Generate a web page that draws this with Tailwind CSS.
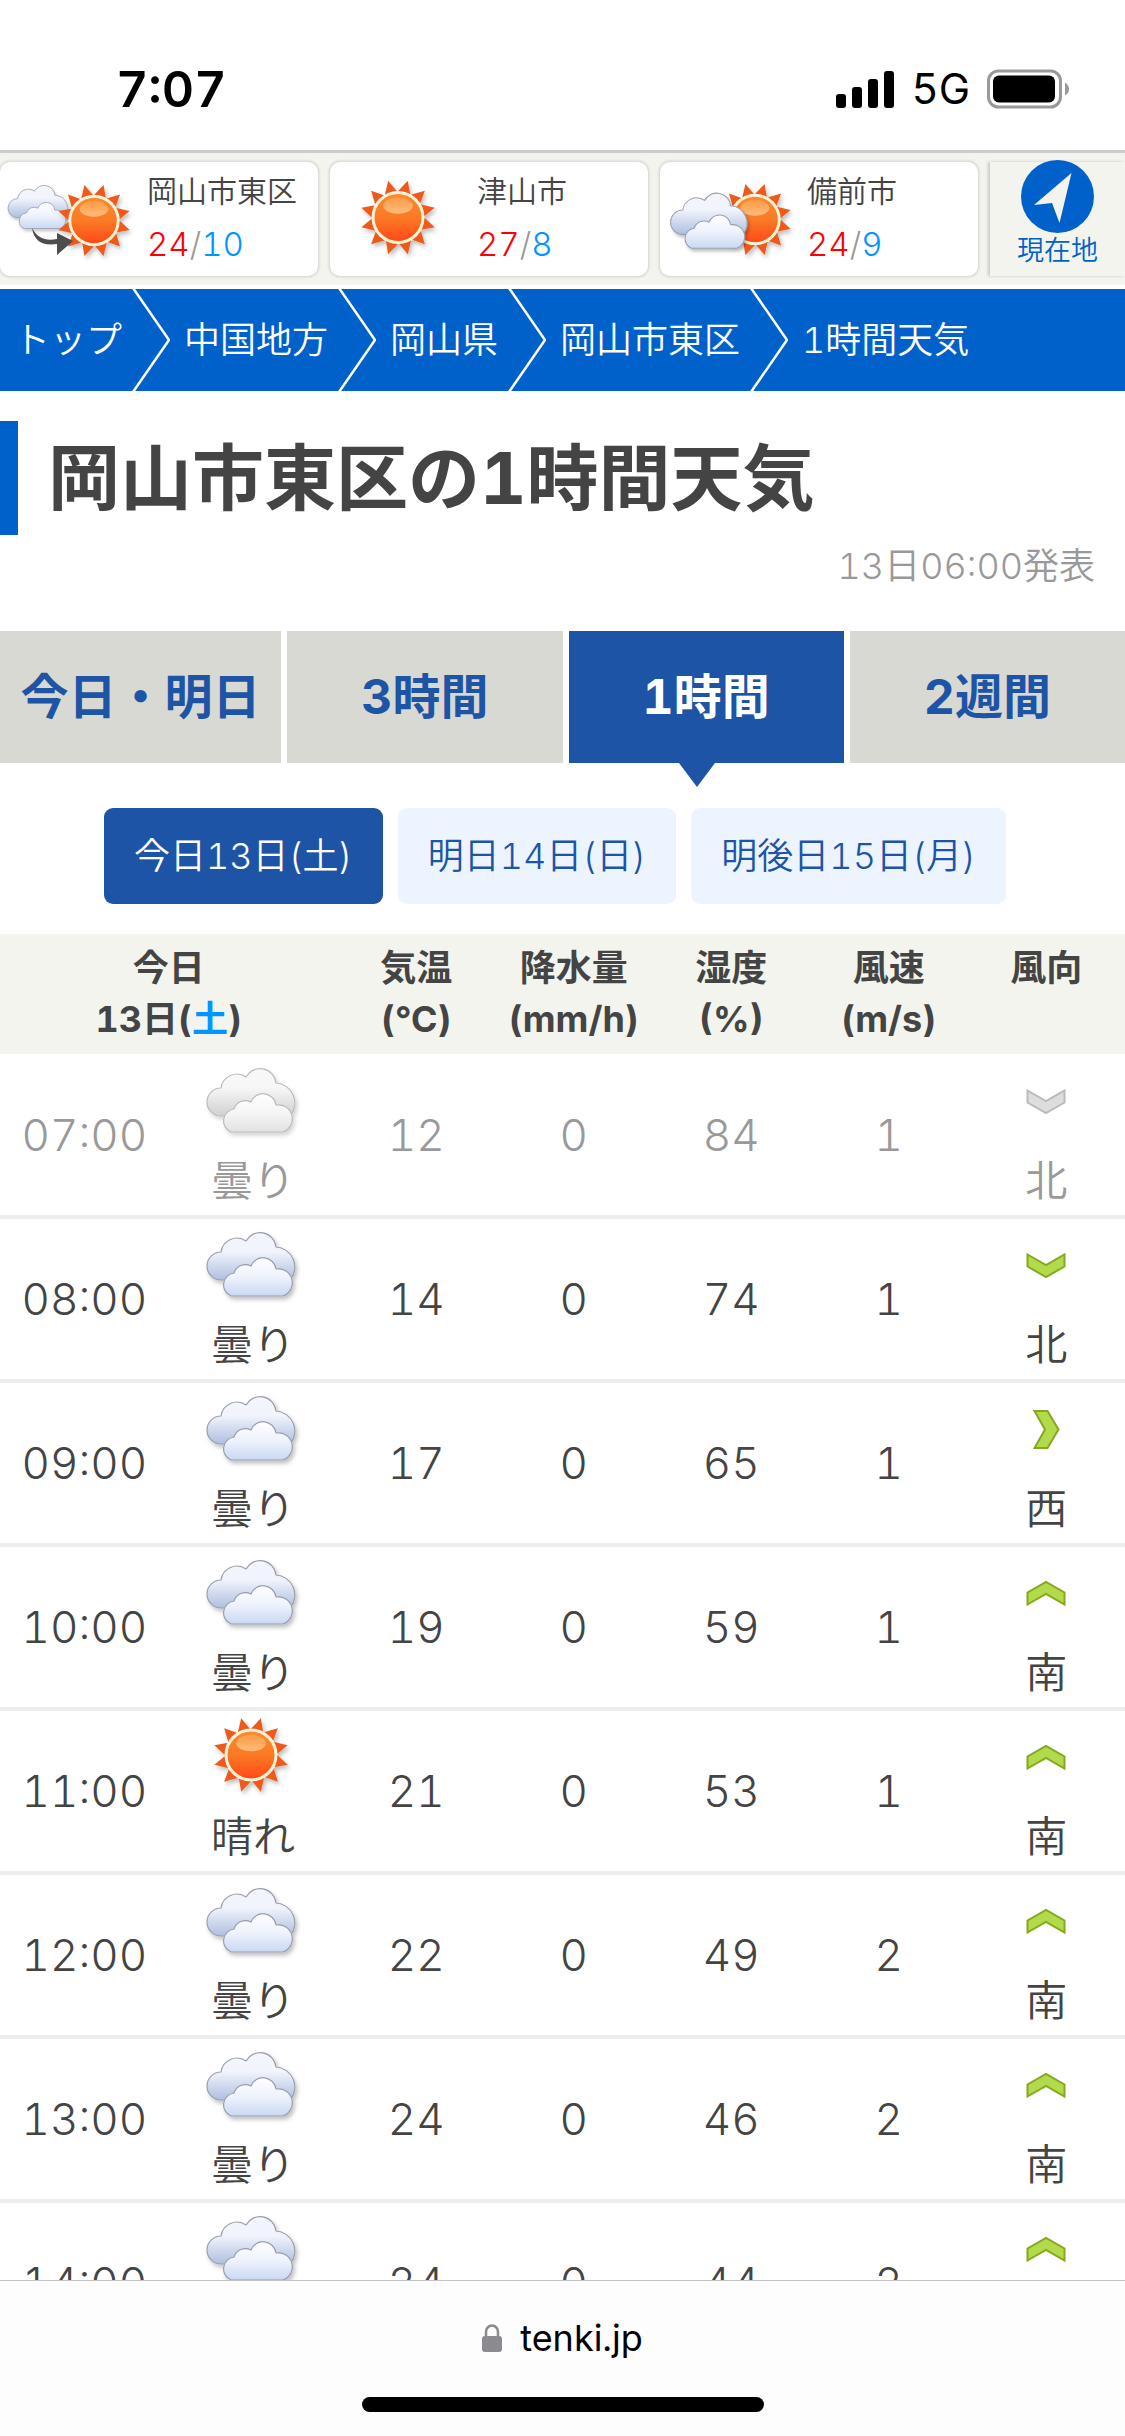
<!DOCTYPE html>
<html lang="ja">
<head>
<meta charset="utf-8">
<meta name="viewport" content="width=device-width, initial-scale=1">
<title>岡山市東区の1時間天気 - tenki.jp</title>
<script src="https://cdn.jsdelivr.net/npm/@tailwindcss/browser@4"></script>
</head>
<body class="bg-white font-['Inter','Noto_Sans_CJK_JP',sans-serif] font-[350] tabular-nums text-[#444]">

<!-- shared icons -->
<svg class="absolute size-0" aria-hidden="true">
  <defs>
    <linearGradient id="ball" x1="0" y1="0" x2="0" y2="1"><stop offset="0" stop-color="#f98a32"/><stop offset=".5" stop-color="#fb7a26"/><stop offset="1" stop-color="#ff4a17"/></linearGradient>
    <linearGradient id="gloss" x1="0" y1="0" x2="0" y2="1"><stop offset="0" stop-color="#fb9a45"/><stop offset="1" stop-color="#ffbd7c"/></linearGradient>
    <linearGradient id="back" x1="0" y1="0" x2="0" y2="1"><stop offset="0" stop-color="#f4f5fd"/><stop offset=".4" stop-color="#f1f4fc"/><stop offset="1" stop-color="#aebfe0"/></linearGradient>
    <linearGradient id="front" x1="0" y1="0" x2="0" y2="1"><stop offset="0" stop-color="#ffffff"/><stop offset=".5" stop-color="#eef2fc"/><stop offset="1" stop-color="#c9d8f2"/></linearGradient>
    <filter id="shade" x="-20%" y="-20%" width="150%" height="150%"><feDropShadow dx="2" dy="3" stdDeviation="2" flood-color="#000" flood-opacity=".25"/></filter>
    <polygon id="ray" points="0,-38 -7,-25 6,-25" fill="#ee5a1c"/>
    <g id="sun" filter="url(#shade)">
      <use href="#ray" transform="rotate(15)"/><use href="#ray" transform="rotate(45)"/><use href="#ray" transform="rotate(75)"/><use href="#ray" transform="rotate(105)"/>
      <use href="#ray" transform="rotate(135)"/><use href="#ray" transform="rotate(165)"/><use href="#ray" transform="rotate(195)"/><use href="#ray" transform="rotate(225)"/>
      <use href="#ray" transform="rotate(255)"/><use href="#ray" transform="rotate(285)"/><use href="#ray" transform="rotate(315)"/><use href="#ray" transform="rotate(345)"/>
      <circle r="26.500" fill="#fff3d6"/><circle r="23.500" fill="url(#ball)"/>
      <path d="M-15 -12 C-12 -23 12 -23 15 -12 C14 -1 -14 -1 -15 -12Z" fill="url(#gloss)"/>
    </g>
    <g id="cloud" stroke="#9a9fad" stroke-width="1.200" stroke-linejoin="round" filter="url(#shade)">
      <path d="M17 51A14 14 0 0 1 17 23A16 16 0 0 1 42 12A16 16 0 0 1 72 18A20 20 0 0 1 86 51Z" fill="url(#back)"/>
      <path d="M27 67A12 12 0 0 1 30 44A12 12 0 0 1 47 37A13 13 0 0 1 72 40A14 14 0 0 1 79 67Z" fill="url(#front)"/>
    </g>
    <g id="wind-down"><path d="M1.500 34.500L20 45L38.500 34.500V46.500L20 57L1.500 46.500Z" stroke-width="2"/></g>
    <g id="wind-right"><path d="M8.500 27H21.500L32.500 45.500L21.500 64H8.500L19 45.500Z" stroke-width="2"/></g>
    <g id="wind-up"><path d="M1.500 56.500L20 46L38.500 56.500V44.500L20 34L1.500 44.500Z" stroke-width="2"/></g>
  </defs>
</svg>

<!-- status bar -->
<header class="flex h-[153px] items-start justify-between border-b-3 border-[#ccc] pl-[116px] pr-14 pt-[60px] text-black">
  <span class="text-[50px] leading-[58px] font-semibold">7:07</span>
  <div class="flex h-[58px] items-center gap-[17px]">
    <svg class="h-[38px] w-[58px]" viewBox="0 0 58 38" aria-label="signal"><rect y="24" width="10" height="14" rx="3"/><rect x="16" y="17" width="10" height="21" rx="3"/><rect x="32" y="9" width="10" height="29" rx="3"/><rect x="48" y="1" width="10" height="37" rx="3"/></svg>
    <span class="text-[42px] leading-[58px] font-normal">5G</span>
    <svg class="h-10 w-[82px]" viewBox="0 0 82 40" aria-label="battery"><rect x="1.500" y="2" width="72" height="36" rx="10" fill="none" stroke="#999" stroke-width="3"/><rect x="6" y="6.500" width="62" height="27" rx="6"/><path d="M78 13.500Q82 16 82 20T78 26.500Z" fill="#999"/></svg>
  </div>
</header>

<!-- saved places -->
<nav class="flex h-[132px] bg-[#f3f4ee] pt-[9px]">
  <div class="flex flex-1 gap-3">
    <a href="#" class="flex h-[114px] flex-1 rounded-[10px] bg-white shadow-[0_0_3px_1px_rgba(0,0,0,0.14)]">
      <svg class="h-[114px] w-[147px] shrink-0" viewBox="0 0 147 114"><use href="#cloud" transform="translate(6 21) scale(.68)"/><use href="#sun" transform="translate(94 58.500) scale(.97)"/><path d="M32 66C34 79 42 84 57 82V93L73 79L57 71V77C46 79 38 77 32 66Z" fill="#4d4d4d"/></svg>
      <span class="flex flex-col pt-[3px] leading-[53px]"><span class="text-[30px]">岡山市東区</span><span class="text-[33px] text-[#999]"><span class="text-[#f00]">24</span>/<span class="text-[#0096ff]">10</span></span></span>
    </a>
    <a href="#" class="flex h-[114px] flex-1 rounded-[10px] bg-white shadow-[0_0_3px_1px_rgba(0,0,0,0.14)]">
      <svg class="h-[114px] w-[147px] shrink-0" viewBox="0 0 147 114"><use href="#sun" transform="translate(68 55.500)"/></svg>
      <span class="flex flex-col pt-[3px] leading-[53px]"><span class="text-[30px]">津山市</span><span class="text-[33px] text-[#999]"><span class="text-[#f00]">27</span>/<span class="text-[#0096ff]">8</span></span></span>
    </a>
    <a href="#" class="flex h-[114px] flex-1 rounded-[10px] bg-white shadow-[0_0_3px_1px_rgba(0,0,0,0.14)]">
      <svg class="h-[114px] w-[147px] shrink-0" viewBox="0 0 147 114"><use href="#sun" transform="translate(95 57.500) scale(.97)"/><use href="#cloud" transform="translate(8 28) scale(.87)"/></svg>
      <span class="flex flex-col pt-[3px] leading-[53px]"><span class="text-[30px]">備前市</span><span class="text-[33px] text-[#999]"><span class="text-[#f00]">24</span>/<span class="text-[#0096ff]">9</span></span></span>
    </a>
  </div>
  <button type="button" class="ml-3 flex h-[114px] w-[135px] flex-col items-center bg-[#f3f4ee] text-[#0061cb] shadow-[-2px_0_3px_rgba(0,0,0,0.18)]">
    <svg class="-mt-0.5 h-[73px] w-[73px] shrink-0" viewBox="0 0 73 73"><circle cx="36.500" cy="36.500" r="36.500" fill="#0061cb"/><path d="M50.500 13L13 45L31 43L38.500 63Z" fill="#f3f4ee"/></svg>
    <span class="text-[27px] leading-9">現在地</span>
  </button>
</nav>

<!-- breadcrumb -->
<nav class="mt-1 bg-[#0061cb] text-4xl leading-[102px] text-white">
  <ol class="flex h-[102px] pl-3.5">
    <li class="flex"><a href="#">トップ</a><svg class="mr-3.5 ml-2.5 h-[102px] w-[38px]" viewBox="0 0 38 102" fill="none" stroke="#fff" stroke-width="2.500"><path d="M1 -1L37 51L1 103"/></svg></li>
    <li class="flex"><a href="#">中国地方</a><svg class="mr-3.5 ml-2.5 h-[102px] w-[38px]" viewBox="0 0 38 102" fill="none" stroke="#fff" stroke-width="2.500"><path d="M1 -1L37 51L1 103"/></svg></li>
    <li class="flex"><a href="#">岡山県</a><svg class="mr-3.5 ml-2.5 h-[102px] w-[38px]" viewBox="0 0 38 102" fill="none" stroke="#fff" stroke-width="2.500"><path d="M1 -1L37 51L1 103"/></svg></li>
    <li class="flex"><a href="#">岡山市東区</a><svg class="mr-3.5 ml-2.5 h-[102px] w-[38px]" viewBox="0 0 38 102" fill="none" stroke="#fff" stroke-width="2.500"><path d="M1 -1L37 51L1 103"/></svg></li>
    <li>1時間天気</li>
  </ol>
</nav>

<main>
  <h1 class="mt-[30px] border-l-18 border-[#0061cb] pl-[30px] text-7xl leading-[114px] font-bold">岡山市東区の1時間天気</h1>
  <p class="pt-1 pr-[30px] text-right text-4xl leading-[54px] text-[#999]">13日06:00発表</p>

  <nav class="mt-[38px] grid grid-cols-4 text-center text-5xl leading-[132px] font-bold text-[#1d54a6]">
    <a href="#" class="bg-[#d8d9d3]">今日・明日</a>
    <a href="#" class="border-l-6 border-white bg-[#d8d9d3]">3時間</a>
    <a href="#" aria-current="page" class="relative border-l-6 border-white bg-[#1d54a6] text-white">1時間<svg class="absolute top-full left-[110px] h-6 w-9" viewBox="0 0 36 24" fill="#1d54a6"><path d="M0 0H36L18 24Z"/></svg></a>
    <a href="#" class="border-l-6 border-white bg-[#d8d9d3]">2週間</a>
  </nav>

  <div class="mt-[45px] flex justify-center gap-[15px] pr-[15px] text-4xl leading-24 text-[#1d54a6]">
    <a href="#" class="rounded-[9px] bg-[#1d54a6] px-[30px] text-white">今日13日(土)</a>
    <a href="#" class="rounded-[9px] bg-[#ecf5ff] px-[30px]">明日14日(日)</a>
    <a href="#" class="rounded-[9px] bg-[#ecf5ff] px-[30px]">明後日15日(月)</a>
  </div>

  <table class="mt-[30px] w-full table-fixed text-center">
    <colgroup><col class="w-[15%]"><col class="w-[15%]"><col class="w-[14%]"><col class="w-[14%]"><col class="w-[14%]"><col class="w-[14%]"><col class="w-[14%]"></colgroup>
    <thead class="bg-[#f3f4ee] text-4xl leading-[51px]">
      <tr class="h-[120px] align-top">
        <th colspan="2" class="pt-[9px] font-bold">今日<br>13日(<span class="text-[#0096ff]">土</span>)</th>
        <th class="pt-[9px] font-bold">気温<br>(℃)</th>
        <th class="pt-[9px] font-bold">降水量<br>(mm/h)</th>
        <th class="pt-[9px] font-bold">湿度<br>(%)</th>
        <th class="pt-[9px] font-bold">風速<br>(m/s)</th>
        <th class="pt-[9px] font-bold">風向</th>
      </tr>
    </thead>
    <tbody class="text-[44px] leading-[66px]">
      <tr class="h-[163px] border-b-4 border-[#ededed] text-[#999]">
        <td>07:00</td>
        <td class="text-[42px]"><svg class="mx-auto h-[92px] w-24 opacity-70 grayscale" viewBox="0 0 96 92"><use href="#cloud" transform="translate(-1 9)"/></svg>曇り</td>
        <td>12</td><td>0</td><td>84</td><td>1</td>
        <td class="text-[42px]"><svg class="mx-auto h-[92px] w-10" viewBox="0 0 40 92" fill="#ddd" stroke="#bbb"><use href="#wind-down"/></svg>北</td>
      </tr>
      <tr class="h-[164px] border-b-4 border-[#ededed]">
        <td>08:00</td>
        <td class="text-[42px]"><svg class="mx-auto h-[92px] w-24" viewBox="0 0 96 92"><use href="#cloud" transform="translate(-1 9)"/></svg>曇り</td>
        <td>14</td><td>0</td><td>74</td><td>1</td>
        <td class="text-[42px]"><svg class="mx-auto h-[92px] w-10" viewBox="0 0 40 92" fill="#b1db4b" stroke="#86a81f"><use href="#wind-down"/></svg>北</td>
      </tr>
      <tr class="h-[164px] border-b-4 border-[#ededed]">
        <td>09:00</td>
        <td class="text-[42px]"><svg class="mx-auto h-[92px] w-24" viewBox="0 0 96 92"><use href="#cloud" transform="translate(-1 9)"/></svg>曇り</td>
        <td>17</td><td>0</td><td>65</td><td>1</td>
        <td class="text-[42px]"><svg class="mx-auto h-[92px] w-10" viewBox="0 0 40 92" fill="#b1db4b" stroke="#86a81f"><use href="#wind-right"/></svg>西</td>
      </tr>
      <tr class="h-[164px] border-b-4 border-[#ededed]">
        <td>10:00</td>
        <td class="text-[42px]"><svg class="mx-auto h-[92px] w-24" viewBox="0 0 96 92"><use href="#cloud" transform="translate(-1 9)"/></svg>曇り</td>
        <td>19</td><td>0</td><td>59</td><td>1</td>
        <td class="text-[42px]"><svg class="mx-auto h-[92px] w-10" viewBox="0 0 40 92" fill="#b1db4b" stroke="#86a81f"><use href="#wind-up"/></svg>南</td>
      </tr>
      <tr class="h-[164px] border-b-4 border-[#ededed]">
        <td>11:00</td>
        <td class="text-[42px]"><svg class="mx-auto h-[92px] w-24" viewBox="0 0 96 92"><use href="#sun" transform="translate(46 43)"/></svg>晴れ</td>
        <td>21</td><td>0</td><td>53</td><td>1</td>
        <td class="text-[42px]"><svg class="mx-auto h-[92px] w-10" viewBox="0 0 40 92" fill="#b1db4b" stroke="#86a81f"><use href="#wind-up"/></svg>南</td>
      </tr>
      <tr class="h-[164px] border-b-4 border-[#ededed]">
        <td>12:00</td>
        <td class="text-[42px]"><svg class="mx-auto h-[92px] w-24" viewBox="0 0 96 92"><use href="#cloud" transform="translate(-1 9)"/></svg>曇り</td>
        <td>22</td><td>0</td><td>49</td><td>2</td>
        <td class="text-[42px]"><svg class="mx-auto h-[92px] w-10" viewBox="0 0 40 92" fill="#b1db4b" stroke="#86a81f"><use href="#wind-up"/></svg>南</td>
      </tr>
      <tr class="h-[164px] border-b-4 border-[#ededed]">
        <td>13:00</td>
        <td class="text-[42px]"><svg class="mx-auto h-[92px] w-24" viewBox="0 0 96 92"><use href="#cloud" transform="translate(-1 9)"/></svg>曇り</td>
        <td>24</td><td>0</td><td>46</td><td>2</td>
        <td class="text-[42px]"><svg class="mx-auto h-[92px] w-10" viewBox="0 0 40 92" fill="#b1db4b" stroke="#86a81f"><use href="#wind-up"/></svg>南</td>
      </tr>
      <tr class="h-[164px] border-b-4 border-[#ededed]">
        <td>14:00</td>
        <td class="text-[42px]"><svg class="mx-auto h-[92px] w-24" viewBox="0 0 96 92"><use href="#cloud" transform="translate(-1 9)"/></svg>曇り</td>
        <td>24</td><td>0</td><td>44</td><td>2</td>
        <td class="text-[42px]"><svg class="mx-auto h-[92px] w-10" viewBox="0 0 40 92" fill="#b1db4b" stroke="#86a81f"><use href="#wind-up"/></svg>南</td>
      </tr>
    </tbody>
  </table>
</main>

<!-- browser address bar -->
<footer class="fixed inset-x-0 bottom-0 flex h-[156px] flex-col items-center justify-between border-t border-[#c4c4c4] bg-[#fdfdfd] pt-8 pb-6 text-black">
  <div class="flex items-center gap-[18px] text-4xl leading-[50px] font-normal">
    <svg class="h-7 w-5" viewBox="0 0 20 28" aria-label="secure"><rect y="12" width="20" height="16" rx="3" fill="#8a8a8f"/><path d="M4 13V8A6 6.500 0 0 1 16 8V13" fill="none" stroke="#8a8a8f" stroke-width="2.500"/></svg>
    <span>tenki.jp</span>
  </div>
  <div class="h-[15px] w-[402px] rounded-full bg-black"></div>
</footer>
</body>
</html>
